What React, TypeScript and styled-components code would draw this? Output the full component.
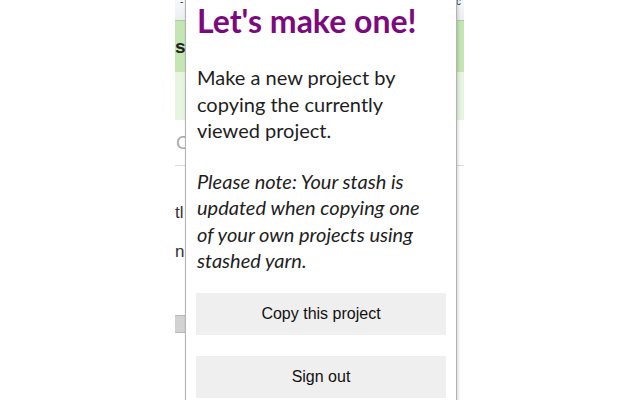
import React from "react";
import styled, { createGlobalStyle } from "styled-components";

const GlobalStyle = createGlobalStyle`
  html, body {
    margin: 0;
    padding: 0;
    background: #ffffff;
    overflow: hidden;
  }
  #root {
    width: 640px;
    height: 400px;
    position: relative;
  }
`;

const Stage = styled.div`
  width: 640px;
  height: 400px;
  position: relative;
  overflow: hidden;
  background: #fff;
`;

// the page that sits behind the popup, only its edges show
const BackPage = styled.div`
  margin-left: 175px;
  width: 289px;
  height: 400px;
  display: flex;
  flex-direction: column;
  overflow: hidden;
  font-family: "Liberation Sans", Arial, sans-serif;
`;

const TopBar = styled.div`
  height: 20px;
  background: linear-gradient(#f7f8fa, #eceef2);
  display: flex;
  justify-content: space-between;
  padding: 0 3px 0 5px;
  font-size: 10px;
  line-height: 4px;
  color: #334;
`;

const Band = styled.div<{ $bg: string; $h: number; $line?: string }>`
  height: ${(p) => p.$h}px;
  background: ${(p) => p.$bg};
  border-top: 1px solid ${(p) => p.$line || p.$bg};
  box-sizing: border-box;
  display: flex;
  align-items: center;
  font-size: 19px;
  font-weight: bold;
  color: #222;
`;

const Faded = styled.div`
  height: 45px;
  border-bottom: 1px solid #dcdcdc;
  display: flex;
  align-items: center;
  font-size: 19px;
  color: #aaa;
  padding-left: 1px;
`;

const TextRow = styled.div<{ $h: number }>`
  height: ${(p) => p.$h}px;
  display: flex;
  align-items: flex-end;
  font-size: 17px;
  color: #333;
`;

const GreyBlock = styled.div`
  height: 18px;
  width: 12px;
  background: #d2d2d2;
  border: 1px solid #b9b9b9;
  border-left: none;
  box-sizing: border-box;
`;

const Popup = styled.div`
  position: absolute;
  left: 185px;
  top: -2px;
  width: 272px;
  height: 420px;
  box-sizing: border-box;
  background: #fff;
  border: 1px solid #b4b4b4;
  box-shadow: 1px 0 3px rgba(0, 0, 0, 0.18);
  padding: 0 10px;
  font-family: Lato, "Open Sans", sans-serif;
`;

const Title = styled.h1`
  margin: 3px 0 0 1px;
  font-size: 32px;
  line-height: 38px;
  font-weight: 700;
  color: #7d0a7d;
`;

const Para = styled.p<{ $italic?: boolean }>`
  margin: 0 0 0 1px;
  max-width: 240px;
  font-size: 20px;
  line-height: 26.5px;
  color: #1e1e1e;
  font-style: ${(p) => (p.$italic ? "italic" : "normal")};
`;

const Body = styled.div`
  display: flex;
  flex-direction: column;
  gap: 24px;
  margin-top: 24px;
`;

const Actions = styled.div`
  display: flex;
  flex-direction: column;
  gap: 21px;
  margin-top: 19px;
`;

const Button = styled.button`
  height: 42px;
  width: 250px;
  border: none;
  background: #efefef;
  font-family: "Liberation Sans", Arial, sans-serif;
  font-size: 16px;
  color: #111;
  cursor: pointer;
`;

export default function App() {
  return (
    <>
      <GlobalStyle />
      <Stage>
        <BackPage>
          <TopBar>
            <span>-</span>
            <span>c</span>
          </TopBar>
          <Band $h={52} $bg="#c3e6b2" $line="#a9cf98">
            s
          </Band>
          <Band $h={48} $bg="#e7f5e0" />
          <Faded>C</Faded>
          <TextRow $h={57}>tl</TextRow>
          <TextRow $h={39}>n</TextRow>
          <TextRow $h={71}>
            <GreyBlock />
          </TextRow>
        </BackPage>
        <Popup>
          <Title>Let's make one!</Title>
          <Body>
            <Para>Make a new project by copying the currently viewed project.</Para>
            <Para $italic>
              Please note: Your stash is updated when copying one of your own projects using stashed yarn.
            </Para>
          </Body>
          <Actions>
            <Button>Copy this project</Button>
            <Button>Sign out</Button>
          </Actions>
        </Popup>
      </Stage>
    </>
  );
}
